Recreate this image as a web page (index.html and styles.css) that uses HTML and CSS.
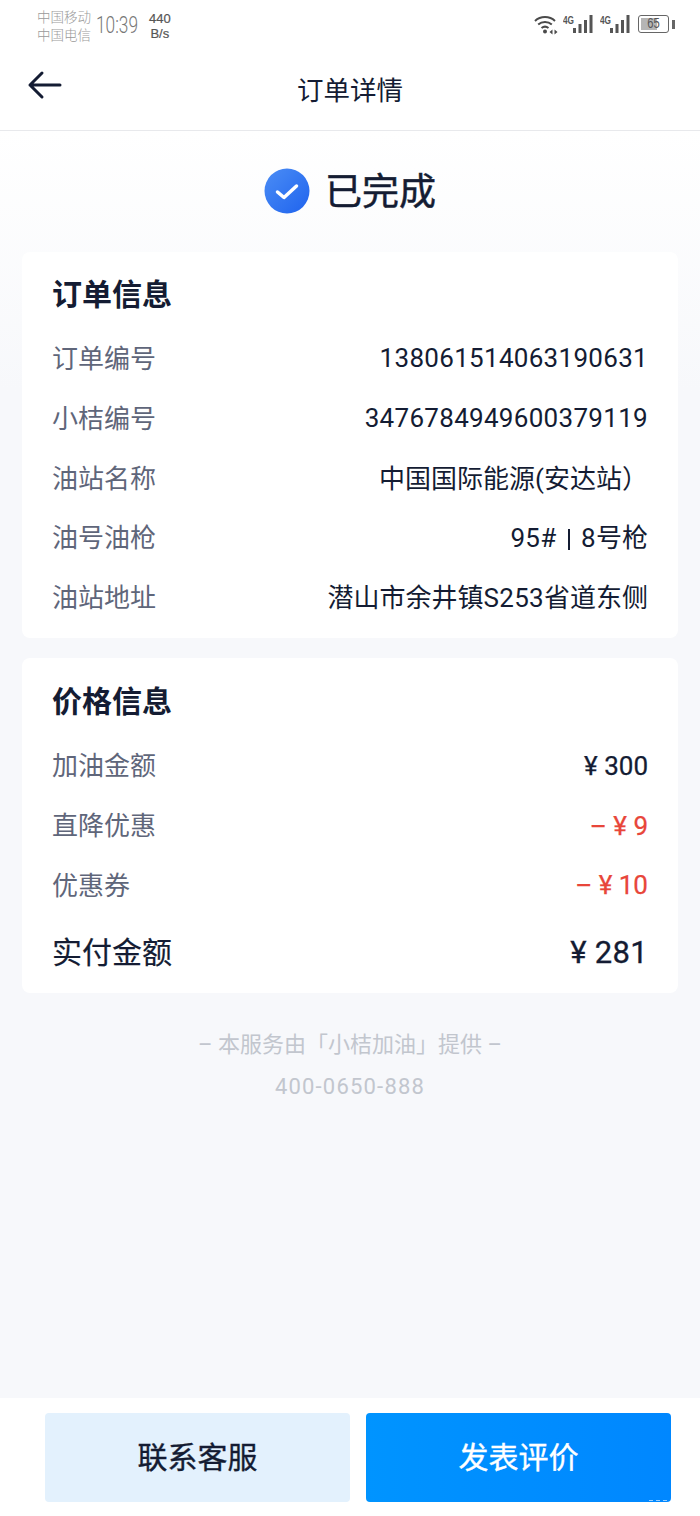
FILE: index.html
```html
<!DOCTYPE html>
<html lang="zh-CN">
<head>
<meta charset="utf-8">
<title>订单详情</title>
<link rel="stylesheet" href="styles.css">
</head>
<body>
<div class="page">
  <div class="statusbar">
    <div class="carriers"><span>中国移动</span><span>中国电信</span></div>
    <div class="clock">10:39</div>
    <div class="speed"><span>440</span><span>B/s</span></div>
    <div class="status-right">
      <svg class="wifi" width="24" height="20" viewBox="0 0 24 20"><g fill="none" stroke="#4a4a4a" stroke-width="2"><path d="M1 6C6.500 .8 15.500 .8 21 6"/><path d="M4.200 9.500C8 6.200 14 6.200 17.800 9.500"/><path d="M7.500 13C9.500 11.400 12.500 11.400 14.500 13"/></g><circle cx="11" cy="16.500" r="2" fill="#4a4a4a"/><path d="M15.500 17l3-2.500v5zM20.500 14.500l3 2.500-3 2.500z" fill="#4a4a4a"/></svg>
      <div class="signal"><span class="g4">4G</span><svg width="20" height="18" viewBox="0 0 20 18"><g fill="#555"><rect x="0" y="13" width="3" height="5"/><rect x="5.500" y="9" width="3" height="9"/><rect x="11" y="5" width="3" height="13"/><rect x="16.500" y="0" width="3" height="18"/></g></svg></div>
      <div class="signal"><span class="g4">4G</span><svg width="20" height="18" viewBox="0 0 20 18"><g fill="#555"><rect x="0" y="13" width="3" height="5"/><rect x="5.500" y="9" width="3" height="9"/><rect x="11" y="5" width="3" height="13"/><rect x="16.500" y="0" width="3" height="18"/></g></svg></div>
      <div class="battery"><div class="battery-body"><div class="battery-fill"></div><span class="battery-num">65</span></div><div class="battery-tip"></div></div>
    </div>
  </div>
  <header class="nav">
    <svg class="back" width="36" height="32" viewBox="0 0 36 32"><path d="M33 16H3M15 4 3 16l12 12" fill="none" stroke="#141c33" stroke-width="3" stroke-linecap="round" stroke-linejoin="round"/></svg>
    <h1 class="nav-title">订单详情</h1>
  </header>
  <main class="content">
    <div class="state">
      <svg width="46" height="46" viewBox="0 0 46 46"><defs><linearGradient id="g" x1="0" y1="0" x2="1" y2="1"><stop offset="0" stop-color="#4b8df5"/><stop offset="1" stop-color="#1f63ee"/></linearGradient></defs><circle cx="23" cy="23" r="22.500" fill="url(#g)"/><path d="M13.500 24l6.500 5.500L32.500 18" fill="none" stroke="#fff" stroke-width="3.500" stroke-linecap="round" stroke-linejoin="round"/></svg>
      <span class="state-text">已完成</span>
    </div>
    <section class="card card-order">
      <h2 class="card-title">订单信息</h2>
      <div class="row"><span class="label">订单编号</span><span class="value num">138061514063190631</span></div>
      <div class="row"><span class="label">小桔编号</span><span class="value num">3476784949600379119</span></div>
      <div class="row"><span class="label">油站名称</span><span class="value">中国国际能源(安达站）</span></div>
      <div class="row"><span class="label">油号油枪</span><span class="value"><span class="num">95#</span><span class="pipe"></span><span class="num">8</span>号枪</span></div>
      <div class="row"><span class="label">油站地址</span><span class="value">潜山市余井镇<span class="num">S253</span>省道东侧</span></div>
    </section>
    <section class="card card-price">
      <h2 class="card-title">价格信息</h2>
      <div class="row"><span class="label">加油金额</span><span class="value money">¥ 300</span></div>
      <div class="row"><span class="label">直降优惠</span><span class="value money red">– ¥ 9</span></div>
      <div class="row"><span class="label">优惠券</span><span class="value money red">– ¥ 10</span></div>
      <div class="row total"><span class="total-label">实付金额</span><span class="total-value">¥ 281</span></div>
    </section>
    <div class="provider">
      <p>– 本服务由「小桔加油」提供 –</p>
      <p class="phone">400-0650-888</p>
    </div>
  </main>
  <footer class="actions">
    <button class="btn btn-light">联系客服</button>
    <button class="btn btn-primary">发表评价</button>
  </footer>
</div>
</body>
</html>
```
FILE: styles.css
```css
* { box-sizing: border-box; margin: 0; padding: 0; }
html, body { background: #fff; }
body { font-family: Roboto, "Noto Sans CJK SC", sans-serif; color: #141c33; }
.page { width: 700px; height: 1516px; display: flex; flex-direction: column; overflow: hidden; }

.statusbar { height: 50px; display: flex; align-items: flex-start; padding: 7px 25px 0 37px; color: #9a9a9a; flex: none; }
.carriers { display: flex; flex-direction: column; font-size: 13.500px; line-height: 18px; width: 59px; font-weight: 300; font-family: "Noto Sans CJK SC", sans-serif; }
.clock { font-family: Roboto, sans-serif; font-size: 24px; font-weight: 300; line-height: 24px; margin-top: 6px; width: 53px; color: #777; transform: scaleX(.72); transform-origin: left; }
.speed { display: flex; flex-direction: column; align-items: center; font-family: "Liberation Sans", sans-serif; font-size: 13px; line-height: 15px; color: #555; margin-top: 4px; -webkit-text-stroke: .2px #555; }
.status-right { margin-left: auto; display: flex; align-items: flex-start; margin-top: 1px; }
.wifi { margin-right: 5px; margin-top: 7px; }
.signal { display: flex; align-items: flex-start; width: 37px; }
.signal svg { margin-top: 7px; flex: none; }
.g4 { font-family: "Liberation Sans", sans-serif; font-size: 11px; font-weight: 700; line-height: 11px; color: #555; width: 10px; margin-top: 7px; transform: scaleX(.75); transform-origin: left; flex: none; }
.battery { display: flex; align-items: center; margin-left: 1px; margin-top: 7px; }
.battery-body { width: 31px; height: 18px; border: 1.500px solid #666; border-radius: 3px; padding: 2px; position: relative; }
.battery-fill { height: 100%; width: 65%; background: #b5b5b5; }
.battery-num { position: absolute; inset: 0; text-align: center; font-family: "Liberation Sans", sans-serif; font-size: 14px; line-height: 15px; color: #555; transform: scaleX(.8); }
.battery-tip { width: 3px; height: 9px; background: #666; margin-left: 3px; }

.nav { height: 81px; flex: none; position: relative; display: flex; align-items: center; justify-content: center; background: #fff; border-bottom: 1px solid #e8e9ec; padding-top: 2px; }
.back { position: absolute; left: 27px; top: 19px; }
.nav-title { font-size: 26.500px; font-weight: 400; line-height: 40px; }

.content { flex: 1; padding: 0 22px; background: linear-gradient(#fff 0, #f7f8fb 260px, #f7f8fb 100%); }
.state { height: 121px; display: flex; align-items: center; justify-content: center; gap: 15px; padding-top: 2px; }
.state svg { margin-bottom: 4px; }
.state-text { font-size: 37px; font-weight: 400; line-height: 50px; -webkit-text-stroke: .5px #141c33; }

.card { background: #fff; border-radius: 8px; padding: 0 30px; }
.card-order { height: 386px; margin-bottom: 20px; }
.card-price { height: 335px; }
.card-title { font-size: 30px; font-weight: 700; line-height: 42px; padding-top: 22px; height: 75px; }
.card-price .card-title { padding-top: 23px; height: 76px; }
.row { display: flex; justify-content: space-between; align-items: center; height: 59.700px; }
.label { font-size: 26px; color: #5f667a; }
.value { font-size: 26px; color: #141c33; font-weight: 400; }
.value.num { padding-top: 2px; }
.num { letter-spacing: .3px; }
.pipe { display: inline-block; width: 2.500px; height: 21px; background: #141c33; margin: 0 11px; vertical-align: -3px; }
.money { padding-top: 4px; -webkit-text-stroke: .25px currentColor; }
.value.red { color: #e8463a; }
.total { height: 71px; padding-top: 2px; }
.total-label { font-size: 30px; font-weight: 400; -webkit-text-stroke: .2px #141c33; }
.total-value { font-size: 31px; font-weight: 400; letter-spacing: .3px; padding-top: 6px; -webkit-text-stroke: .3px #141c33; }

.provider { margin-top: 31px; text-align: center; color: #c2c6ce; font-size: 22px; line-height: 42px; }
.phone { letter-spacing: 1.200px; }

.actions { height: 118px; flex: none; background: #fff; display: flex; gap: 16px; padding: 15px 29px 14px 45px; }
.btn { flex: 1; border: 0; border-radius: 4px; font-family: inherit; font-size: 30px; font-weight: 400; -webkit-text-stroke: .35px currentColor; padding-bottom: 6px; position: relative; }
.btn-light { background: #e3f1fd; color: #141c33; }
.btn-primary { background: linear-gradient(90deg, #0094ff, #0087ff); color: #fff; }
.btn-primary::after { content: ""; position: absolute; right: 2px; bottom: 1px; width: 20px; height: 1px; background: repeating-linear-gradient(90deg, #fff 0 4px, transparent 4px 7px); opacity: .6; }
```
